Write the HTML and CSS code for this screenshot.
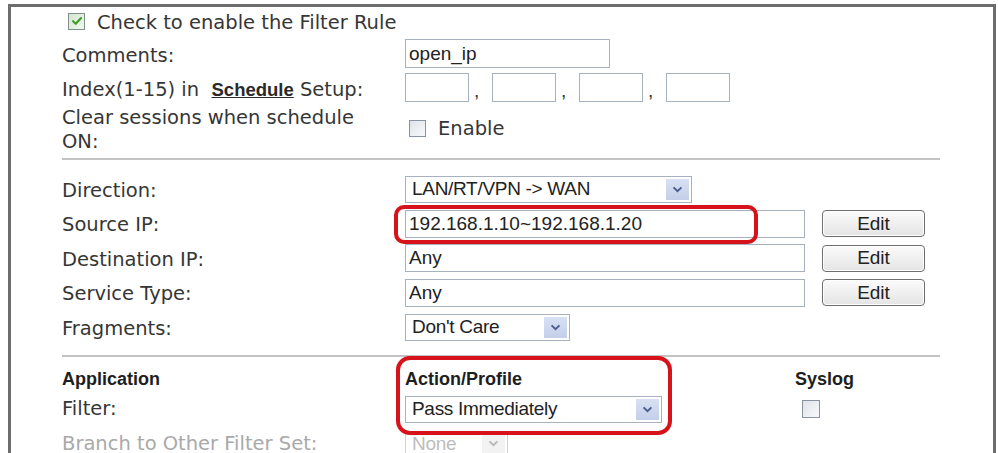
FILE: index.html
```html
<!DOCTYPE html>
<html>
<head>
<meta charset="utf-8">
<title>Filter Rule</title>
<link rel="stylesheet" href="styles.css">
</head>
<body>
<div class="frame">
  <div class="panel">
    <div class="row r-check">
      <span class="cb cb-main checked"><svg viewBox="0 0 16 16" width="14" height="14"><path d="M3.5 8.2 L6.6 11.2 L12.6 4.6" fill="none" stroke="#3f9b2a" stroke-width="2.4" stroke-linecap="round" stroke-linejoin="round"/></svg></span>
      <span class="check-text">Check to enable the Filter Rule</span>
    </div>
    <div class="row r-comments">
      <div class="label shift">Comments:</div>
      <input class="text w-comments" type="text" value="open_ip">
    </div>
    <div class="row r-index">
      <div class="label shift">Index(1-15) in&nbsp; <span class="sched">Schedule</span> Setup:</div>
      <div class="idx">
        <input class="text w-idx" type="text"><span class="comma">,</span>
        <input class="text w-idx" type="text"><span class="comma">,</span>
        <input class="text w-idx" type="text"><span class="comma">,</span>
        <input class="text w-idx" type="text">
      </div>
    </div>
    <div class="row r-clear">
      <div class="label two">Clear sessions when schedule<br>ON:</div>
      <div class="enable"><span class="cb"></span><span>Enable</span></div>
    </div>
    <hr class="sep">
    <div class="sec2">
      <div class="row">
        <div class="label">Direction:</div>
        <div class="select w-dir"><span class="sel-text">LAN/RT/VPN -&gt; WAN</span><span class="arrow"><svg viewBox="0 0 12 8" width="11" height="7"><path d="M1.5 1.5 L6 6 L10.5 1.5" fill="none" stroke="#4a5d8e" stroke-width="2.2"/></svg></span></div>
      </div>
      <div class="row">
        <div class="label">Source IP:</div>
        <input class="text w-ip" type="text" value="192.168.1.10~192.168.1.20">
        <button class="edit">Edit</button>
      </div>
      <div class="row">
        <div class="label">Destination IP:</div>
        <input class="text w-ip" type="text" value="Any">
        <button class="edit">Edit</button>
      </div>
      <div class="row">
        <div class="label">Service Type:</div>
        <input class="text w-ip" type="text" value="Any">
        <button class="edit">Edit</button>
      </div>
      <div class="row">
        <div class="label">Fragments:</div>
        <div class="select w-frag"><span class="sel-text">Don't Care</span><span class="arrow"><svg viewBox="0 0 12 8" width="11" height="7"><path d="M1.5 1.5 L6 6 L10.5 1.5" fill="none" stroke="#4a5d8e" stroke-width="2.2"/></svg></span></div>
      </div>
    </div>
    <hr class="sep sep2">
    <div class="sec3">
      <div class="row r-head">
        <div class="label bold">Application</div>
        <div class="h-action bold">Action/Profile</div>
        <div class="bold">Syslog</div>
      </div>
      <div class="row r-filter">
        <div class="label">Filter:</div>
        <div class="select w-filter"><span class="sel-text">Pass Immediately</span><span class="arrow"><svg viewBox="0 0 12 8" width="11" height="7"><path d="M1.5 1.5 L6 6 L10.5 1.5" fill="none" stroke="#4a5d8e" stroke-width="2.2"/></svg></span></div>
        <span class="cb cb-syslog"></span>
      </div>
      <div class="row r-branch">
        <div class="label faded">Branch to Other Filter Set:</div>
        <div class="select w-branch disabled"><span class="sel-text">None</span><span class="arrow"><svg viewBox="0 0 12 8" width="11" height="7"><path d="M1.5 1.5 L6 6 L10.5 1.5" fill="none" stroke="#b9b9b9" stroke-width="2.2"/></svg></span></div>
      </div>
    </div>
    <div class="hl hl-src"></div>
    <div class="hl hl-action"></div>
  </div>
</div>
</body>
</html>
```

FILE: styles.css
```css
* { box-sizing: border-box; }
html, body {
  margin: 0;
  height: 453px;
  overflow: hidden;
  background: #fff;
}
.frame {
  margin: 4px 2px 0 8px;
  border: 3px solid #6d6d6d;
  border-bottom: none;
  height: 470px;
}
.panel {
  position: relative;
  padding: 0 53px 0 51px;
  font-family: "DejaVu Sans", Verdana, sans-serif;
  font-size: 19.5px;
  color: #363636;
}
.row {
  display: flex;
  align-items: center;
}
.label {
  width: 343px;
  flex: none;
  white-space: nowrap;
  line-height: 22px;
}
.label.shift { padding-top: 5px; }
.label.faded { color: #a9a9a9; }
.r-check { height: 32px; }
.check-text { line-height: 22px; }
.cb {
  display: inline-flex;
  align-items: center;
  justify-content: center;
  width: 17px;
  height: 17px;
  border: 1px solid #8793a3;
  background: linear-gradient(135deg, #dfe3e8, #f8f9fb);
  flex: none;
}
.cb.checked {
  border-color: #7f8f8a;
  background: linear-gradient(135deg, #d2e6d0, #f3f9f1);
}
.cb-main {
  margin-left: 6px;
  margin-right: 12px;
  margin-bottom: 4px;
}
.r-comments { height: 29px; }
.r-index { height: 38px; }
.r-clear {
  height: 52px;
  align-items: flex-start;
}
.label.two {
  line-height: 24px;
  padding-top: 0;
}
.enable {
  display: flex;
  align-items: center;
  margin-top: 14px;
  line-height: 17px;
}
.enable .cb { margin: 0 12px 0 4px; }
.text {
  height: 28px;
  border: 1px solid #a8b2be;
  padding: 0 3px;
  font-family: "Liberation Sans", Arial, sans-serif;
  font-size: 19px;
  color: #222;
  background: #fff;
  outline: none;
}
.w-comments { width: 205px; height: 29px; }
.w-idx { width: 64px; height: 29px; }
.w-ip { width: 400px; }
.idx { display: flex; align-items: center; }
.comma {
  width: 23px;
  padding-left: 5px;
  font-family: "Liberation Sans", Arial, sans-serif;
  font-size: 19px;
  padding-top: 8px;
  color: #333;
}
.sched {
  font-family: "Liberation Sans", Arial, sans-serif;
  font-weight: bold;
  font-size: 18.5px;
  text-decoration: underline;
  color: #2a2a2a;
}
.sep {
  margin: 0;
  border: 0;
  border-top: 2px solid #c3c3c3;
  height: 0;
}
.sec2 { padding-top: 12px; }
.sec2 .row { height: 34.5px; }
.sec2 .label { padding-top: 3px; }
.sep2 { margin-top: 10.5px; }
.select {
  display: flex;
  align-items: center;
  height: 27px;
  border: 1px solid #a8b2be;
  background: #fff;
  font-family: "Liberation Sans", Arial, sans-serif;
  font-size: 19px;
  color: #222;
}
.sel-text {
  flex: 1;
  padding-left: 6px;
  white-space: nowrap;
  letter-spacing: -0.3px;
}
.arrow {
  display: flex;
  align-items: center;
  justify-content: center;
  width: 23px;
  height: 21px;
  margin-right: 2px;
  background: linear-gradient(#d8e1f3, #c3cfea);
}
.w-dir { width: 287px; }
.w-frag { width: 165px; }
.w-filter { width: 257px; }
.w-branch { width: 103px; height: 26px; }
.select.disabled { border-color: #d2d2d2; color: #bdbdbd; }
.select.disabled .arrow { background: #f2f2f2; }
.edit {
  margin-left: 17px;
  width: 103px;
  height: 27px;
  border: 1px solid #6e6e6e;
  border-radius: 4px;
  background: linear-gradient(#fbfbfb, #e4e4e4);
  box-shadow: inset 0 0 0 1px #fff;
  font-family: "Liberation Sans", Arial, sans-serif;
  font-size: 19px;
  color: #222;
  padding: 0;
}
.sec3 { padding-top: 6px; }
.bold {
  font-family: "Liberation Sans", Arial, sans-serif;
  font-weight: bold;
  font-size: 18px;
  color: #1e1e1e;
}
.r-head { height: 32px; }
.h-action { width: 390px; flex: none; }
.r-filter { height: 28px; }
.cb-syslog { margin-left: 140px; width: 18px; height: 18px; }
.r-branch { height: 35px; margin-top: 3px; }
.hl {
  position: absolute;
  border: 4px solid #d6131b;
  border-radius: 10px;
  pointer-events: none;
}
.hl-src {
  left: 383px;
  top: 198px;
  width: 364px;
  height: 39px;
}
.hl-action {
  left: 385px;
  top: 349px;
  width: 276px;
  height: 79px;
  border-radius: 14px;
}
```
